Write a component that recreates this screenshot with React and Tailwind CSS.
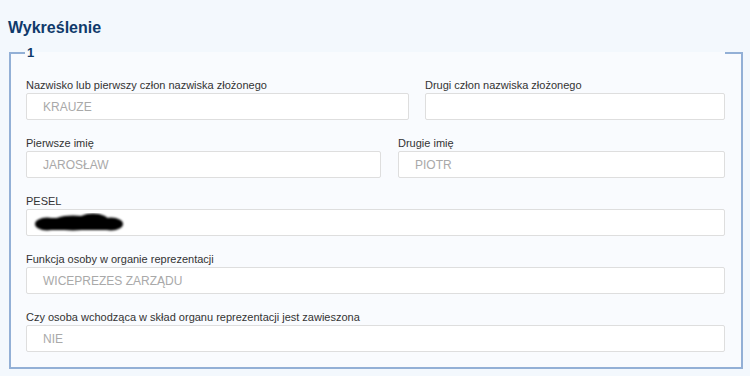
import React from 'react'

const Field = ({ label, value, className = '', children }) => (
  <div className={'flex flex-col ' + className}>
    <label className="text-[11px] leading-[13px] text-[#333] mb-[1px]">{label}</label>
    <div className="h-[27px] bg-white border border-[#dedede] rounded-[2px] flex items-center pl-[16px] text-[12px] text-[#a9a9a9]">
      {children || value}
    </div>
  </div>
)

const Redacted = () => (
  <svg width="92" height="20" viewBox="0 0 92 20" className="-ml-[10px]">
    <defs>
      <filter id="soft" x="-10%" y="-30%" width="120%" height="160%">
        <feGaussianBlur stdDeviation="0.8" />
      </filter>
    </defs>
    <g filter="url(#soft)" fill="#000">
      <ellipse cx="14" cy="11" rx="12" ry="6.5" />
      <ellipse cx="40" cy="10" rx="22" ry="7.5" />
      <ellipse cx="60" cy="8.5" rx="16" ry="8" />
      <ellipse cx="78" cy="11" rx="12" ry="6.5" />
      <rect x="6" y="5" width="78" height="12" rx="6" />
    </g>
  </svg>
)

export default function App() {
  return (
    <div className="w-[750px] h-[376px] bg-[#f3f8fd] overflow-hidden font-['Liberation_Sans',Arial,sans-serif]">
      <h2 className="pt-[18px] pl-[8px] text-[16px] leading-[20px] font-bold text-[#0f3a6b]">Wykreślenie</h2>
      <fieldset className="mt-[8px] ml-[9px] w-[734px] h-[323px] border-2 border-[#93b0d6] bg-[#f9fbfe] px-[15px] pt-[19px]">
        <legend className="-ml-[1px] w-[700px] px-[2px] text-[13px] leading-[14px] font-bold text-[#0f3a6b]">1</legend>
        <div className="flex flex-col gap-[17px]">
          <div className="flex gap-[16px]">
            <Field className="w-[383px]" label="Nazwisko lub pierwszy człon nazwiska złożonego" value="KRAUZE" />
            <Field className="w-[300px]" label="Drugi człon nazwiska złożonego" value="" />
          </div>
          <div className="flex gap-[17px]">
            <Field className="w-[355px]" label="Pierwsze imię" value="JAROSŁAW" />
            <Field className="w-[327px]" label="Drugie imię" value="PIOTR" />
          </div>
          <Field className="w-[699px]" label="PESEL">
            <Redacted />
          </Field>
          <Field className="w-[699px]" label="Funkcja osoby w organie reprezentacji" value="WICEPREZES ZARZĄDU" />
          <Field className="w-[699px]" label="Czy osoba wchodząca w skład organu reprezentacji jest zawieszona" value="NIE" />
        </div>
      </fieldset>
    </div>
  )
}
